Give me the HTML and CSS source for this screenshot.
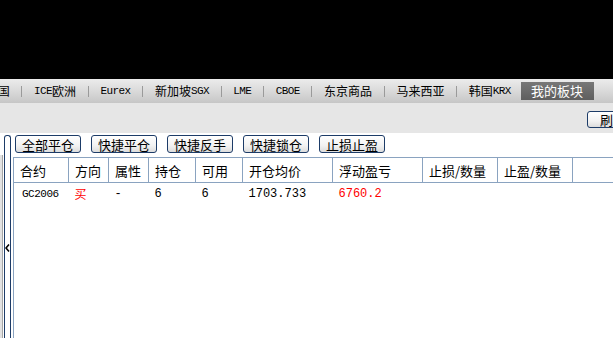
FILE: index.html
```html
<!DOCTYPE html>
<html lang="zh-CN">

<head>
  <meta charset="UTF-8" />
  <meta name="viewport" content="width=device-width, initial-scale=1.0" />
  <title>交易</title>
  <link rel="stylesheet" href="styles.css">
</head>

<body>
  <div class="top"></div>

  <nav class="tabs">
    <span class="tab tab-cut">美国</span>
    <span class="sep"></span>
    <span class="tab"><span class="en">ICE</span>欧洲</span>
    <span class="sep"></span>
    <span class="tab"><span class="en">Eurex</span></span>
    <span class="sep"></span>
    <span class="tab">新加坡<span class="en">SGX</span></span>
    <span class="sep"></span>
    <span class="tab"><span class="en">LME</span></span>
    <span class="sep"></span>
    <span class="tab"><span class="en">CBOE</span></span>
    <span class="sep"></span>
    <span class="tab">东京商品</span>
    <span class="sep"></span>
    <span class="tab">马来西亚</span>
    <span class="sep"></span>
    <span class="tab">韩国<span class="en">KRX</span></span>
    <span class="tab tab-active">我的板块</span>
  </nav>

  <div class="toolbar">
    <button class="btn btn-refresh">刷新</button>
  </div>

  <main class="main">
    <div class="gutter">
      <div class="edge"></div>
      <div class="splitter">
        <svg width="5" height="8" viewBox="0 0 5 8">
          <polyline points="4,0.5 1,4 4,7.5" fill="none" stroke="#000" stroke-width="1.6" />
        </svg>
      </div>
    </div>

    <section class="panel">
      <div class="actions">
        <button class="btn">全部平仓</button>
        <button class="btn">快捷平仓</button>
        <button class="btn">快捷反手</button>
        <button class="btn">快捷锁仓</button>
        <button class="btn">止损止盈</button>
      </div>

      <table class="positions">
        <colgroup>
          <col style="width: 55px">
          <col style="width: 40px">
          <col style="width: 40px">
          <col style="width: 47px">
          <col style="width: 47px">
          <col style="width: 90px">
          <col style="width: 90px">
          <col style="width: 75px">
          <col style="width: 75px">
          <col>
        </colgroup>
        <thead>
          <tr>
            <th>合约</th>
            <th>方向</th>
            <th>属性</th>
            <th>持仓</th>
            <th>可用</th>
            <th>开仓均价</th>
            <th>浮动盈亏</th>
            <th>止损/数量</th>
            <th>止盈/数量</th>
            <th></th>
          </tr>
        </thead>
        <tbody>
          <tr>
            <td class="code">GC2006</td>
            <td class="red">买</td>
            <td class="num">-</td>
            <td class="num">6</td>
            <td class="num">6</td>
            <td class="num">1703.733</td>
            <td class="num red">6760.2</td>
            <td></td>
            <td></td>
            <td></td>
          </tr>
        </tbody>
      </table>
    </section>
  </main>
</body>

</html>
```

FILE: styles.css
```css
:root {
  --navy: #1d3c68;
  --grid: #8aa3c0;
  --band: #e6e6e6;
  --red: #ff0000;
}

* {
  box-sizing: border-box;
  margin: 0;
  padding: 0;
}

body {
  width: 613px;
  height: 338px;
  overflow: hidden;
  background: #ffffff;
  color: #000000;
  font-family: "Noto Sans CJK SC", "Liberation Sans", sans-serif;
  font-size: 13px;
}

.top {
  height: 79px;
  background: #000000;
}

/* 市场标签 */
.tabs {
  display: flex;
  align-items: center;
  height: 24px;
  margin-left: -26px;
  background: linear-gradient(#ececec, #d2d2d2 70%, #c6c6c6);
  white-space: nowrap;
  font-size: 12px;
}

.tab {
  display: flex;
  align-items: center;
  height: 18px;
  padding: 0 11.7px;
  line-height: 18px;
}

.en {
  font-family: "Liberation Mono", monospace;
  font-size: 11px;
  letter-spacing: -0.6px;
}

.sep {
  width: 1px;
  height: 11px;
  background: #9a9a9a;
}

.tab-active {
  width: 73px;
  margin-left: -2px;
  justify-content: center;
  padding: 0;
  background: linear-gradient(#777777, #5e5e5e);
  color: #ffffff;
  font-size: 13px;
}

.toolbar {
  display: flex;
  justify-content: flex-end;
  height: 30px;
  padding-top: 8px;
  background: var(--band);
  overflow: hidden;
}

.btn {
  height: 18px;
  padding: 0 6px;
  border: 1px solid var(--navy);
  border-radius: 3px;
  background: linear-gradient(#ffffff, #f2f2f2 60%, #dcdcdc);
  font-family: "Noto Sans CJK SC", sans-serif;
  font-size: 13px;
  line-height: 15px;
  color: #000000;
}

.btn-refresh {
  width: 60px;
  height: 17px;
  margin-right: -34px;
  padding-left: 12px;
  text-align: left;
}

.main {
  display: flex;
  height: 205px;
}

/* 左侧折叠条 */
.gutter {
  display: flex;
  width: 13px;
  flex-shrink: 0;
}

.edge {
  width: 3px;
  margin-top: 22px;
  background: #e2e2e2;
  border-right: 1px solid #a6a6a6;
}

.splitter {
  display: flex;
  justify-content: center;
  width: 7px;
  margin: 2px 0 0 1px;
  padding-top: 108px;
  border: 1px solid var(--navy);
  border-bottom: none;
  border-radius: 3px 3px 0 0;
}

.panel {
  flex: 1;
  display: flex;
  flex-direction: column;
  min-width: 0;
}

.actions {
  display: flex;
  gap: 10px;
  height: 24px;
  padding: 2px 0 0 2px;
}

.actions .btn {
  width: 66px;
}

.positions {
  flex: 1;
  width: 600px;
  border-collapse: collapse;
  table-layout: fixed;
  border-left: 1px solid var(--grid);
}

.positions th {
  height: 25px;
  padding-left: 6px;
  border-top: 1px solid var(--grid);
  border-bottom: 1px solid var(--grid);
  border-right: 1px solid var(--grid);
  font-weight: normal;
  font-size: 13px;
  text-align: left;
}

.positions th:last-child {
  border-right: none;
}

.positions td {
  height: 22px;
  padding-left: 6px;
  vertical-align: middle;
  font-size: 12px;
  line-height: 16px;
  white-space: nowrap;
}

.positions tbody tr:last-child td {
  vertical-align: top;
  padding-top: 3px;
}

.positions .code {
  padding-left: 8px;
  font-family: "Liberation Mono", monospace;
  font-size: 11px;
  letter-spacing: -0.5px;
}

.positions .num {
  font-family: "Liberation Mono", monospace;
  font-size: 12px;
}

.red {
  color: var(--red);
}
```
